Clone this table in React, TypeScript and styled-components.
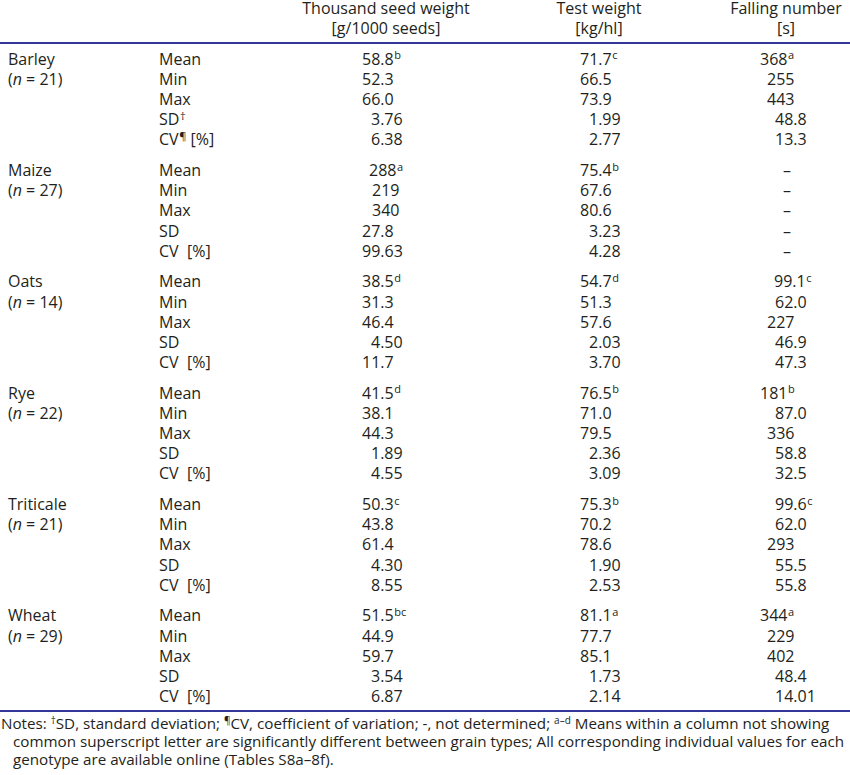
import React from "react";
import styled, { createGlobalStyle } from "styled-components";

const Global = createGlobalStyle`
  html, body { margin: 0; padding: 0; background: #ffffff; }
  body { font-family: "Open Sans", "Noto Sans", sans-serif; color: #231f20; }
`;

const Page = styled.div`
  width: 850px;
  height: 775px;
  overflow: hidden;
  background: #fff;
`;

const Grid = styled.div`
  display: grid;
  grid-template-columns: 159px 203px 218px 179px 91px;
  font-size: 16px;
`;

const Head = styled.div`
  grid-column: 1 / -1;
  display: grid;
  grid-template-columns: 300px 172px 254px 120px 4px;
  border-bottom: 2px solid #33379a;
  padding-bottom: 2px;
`;

const HeadCell = styled.div<{ $col: number }>`
  grid-column: ${(p) => p.$col};
  text-align: center;
  white-space: nowrap;
`;

const HeadLine1 = styled.div`
  line-height: 17px;
`;
const HeadLine2 = styled.div`
  line-height: 23px;
`;

const Group = styled.div<{ $first?: boolean; $last?: boolean }>`
  grid-column: 1 / -1;
  display: grid;
  grid-template-columns: subgrid;
  padding-top: ${(p) => (p.$first ? "4.7px" : "10.4px")};
  padding-bottom: ${(p) => (p.$last ? "3.3px" : "0")};
  border-bottom: ${(p) => (p.$last ? "2px solid #33379a" : "none")};
`;

const Cell = styled.div<{ $pad?: number; $pre?: boolean }>`
  line-height: 20.2px;
  height: 20.2px;
  white-space: ${(p) => (p.$pre ? "pre" : "nowrap")};
  padding-left: ${(p) => p.$pad ?? 0}px;
`;

const Sup = styled.sup`
  font-size: 11px;
  line-height: 0;
  vertical-align: 5.5px;
  margin-left: 0.5px;
`;

const Notes = styled.div`
  font-size: 15.2px;
  line-height: 18px;
  padding-top: 2px;
  padding-left: 13px;
  text-indent: -12px;
  white-space: nowrap;
`;

const NSup = styled.sup`
  font-size: 10px;
  line-height: 0;
  vertical-align: 5px;
`;

type Val = [string, number, string?];

interface GroupData {
  name: string;
  n: number;
  stats: React.ReactNode[];
  tsw: Val[];
  tw: Val[];
  fn: Val[];
}

const stdStats: React.ReactNode[] = ["Mean", "Min", "Max", "SD", "CV  [%]"];

const groups: GroupData[] = [
  {
    name: "Barley",
    n: 21,
    stats: [
      "Mean",
      "Min",
      "Max",
      <>SD<Sup>†</Sup></>,
      <>CV<Sup>¶</Sup> [%]</>,
    ],
    tsw: [["58.8", 0, "b"], ["52.3", 0], ["66.0", 0], ["3.76", 9], ["6.38", 9]],
    tw: [["71.7", 0, "c"], ["66.5", 0], ["73.9", 0], ["1.99", 9], ["2.77", 9]],
    fn: [["368", 0, "a"], ["255", 7], ["443", 7], ["48.8", 15], ["13.3", 15]],
  },
  {
    name: "Maize",
    n: 27,
    stats: stdStats,
    tsw: [["288", 7, "a"], ["219", 10], ["340", 10], ["27.8", 0], ["99.63", 0]],
    tw: [["75.4", 0, "b"], ["67.6", 0], ["80.6", 0], ["3.23", 9], ["4.28", 9]],
    fn: [["–", 23], ["–", 23], ["–", 23], ["–", 23], ["–", 23]],
  },
  {
    name: "Oats",
    n: 14,
    stats: stdStats,
    tsw: [["38.5", 0, "d"], ["31.3", 0], ["46.4", 0], ["4.50", 9], ["11.7", 0]],
    tw: [["54.7", 0, "d"], ["51.3", 0], ["57.6", 0], ["2.03", 9], ["3.70", 9]],
    fn: [["99.1", 14, "c"], ["62.0", 15], ["227", 7], ["46.9", 15], ["47.3", 15]],
  },
  {
    name: "Rye",
    n: 22,
    stats: stdStats,
    tsw: [["41.5", 0, "d"], ["38.1", 0], ["44.3", 0], ["1.89", 9], ["4.55", 9]],
    tw: [["76.5", 0, "b"], ["71.0", 0], ["79.5", 0], ["2.36", 9], ["3.09", 9]],
    fn: [["181", 0, "b"], ["87.0", 15], ["336", 7], ["58.8", 15], ["32.5", 15]],
  },
  {
    name: "Triticale",
    n: 21,
    stats: stdStats,
    tsw: [["50.3", 0, "c"], ["43.8", 0], ["61.4", 0], ["4.30", 9], ["8.55", 9]],
    tw: [["75.3", 0, "b"], ["70.2", 0], ["78.6", 0], ["1.90", 9], ["2.53", 9]],
    fn: [["99.6", 15, "c"], ["62.0", 15], ["293", 7], ["55.5", 15], ["55.8", 15]],
  },
  {
    name: "Wheat",
    n: 29,
    stats: stdStats,
    tsw: [["51.5", 0, "bc"], ["44.9", 0], ["59.7", 0], ["3.54", 9], ["6.87", 9]],
    tw: [["81.1", 0, "a"], ["77.7", 0], ["85.1", 0], ["1.73", 9], ["2.14", 9]],
    fn: [["344", 0, "a"], ["229", 7], ["402", 7], ["48.4", 15], ["14.01", 15]],
  },
];

const renderVal = (v: Val, base: number, key: string) => (
  <Cell key={key} $pad={base + v[1]}>
    {v[0]}
    {v[2] ? <Sup>{v[2]}</Sup> : null}
  </Cell>
);

export default function App() {
  return (
    <Page>
      <Global />
      <Grid>
        <Head>
          <HeadCell $col={2}>
            <HeadLine1>Thousand seed weight</HeadLine1>
            <HeadLine2>[g/1000 seeds]</HeadLine2>
          </HeadCell>
          <HeadCell $col={3}>
            <HeadLine1>Test weight</HeadLine1>
            <HeadLine2>[kg/hl]</HeadLine2>
          </HeadCell>
          <HeadCell $col={4}>
            <HeadLine1>Falling number</HeadLine1>
            <HeadLine2>[s]</HeadLine2>
          </HeadCell>
        </Head>
        {groups.map((g, gi) => (
          <Group key={g.name} $first={gi === 0} $last={gi === groups.length - 1}>
            {g.stats.map((s, i) => (
              <React.Fragment key={i}>
                <Cell $pad={8}>
                  {i === 0 ? g.name : i === 1 ? <>(<i>n</i> = {g.n})</> : null}
                </Cell>
                <Cell $pad={0} $pre>{s}</Cell>
                {renderVal(g.tsw[i], 0, "t")}
                {renderVal(g.tw[i], 0, "w")}
                {renderVal(g.fn[i], 1, "f")}
              </React.Fragment>
            ))}
          </Group>
        ))}
      </Grid>
      <Notes>
        Notes: <NSup>†</NSup>SD, standard deviation; <NSup>¶</NSup>CV, coefficient of variation; -, not
        determined; <NSup>a–d</NSup> Means within a column not showing
        <br />
        common superscript letter are significantly different between grain types; All corresponding individual values for each
        <br />
        genotype are available online (Tables S8a–8f).
      </Notes>
    </Page>
  );
}
